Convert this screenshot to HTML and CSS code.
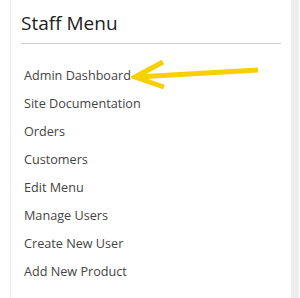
FILE: index.html
```html
<!DOCTYPE html>
<html>
<head>
<meta charset="utf-8">
<link rel="stylesheet" href="styles.css">
</head>
<body>
<div class="page">
  <aside class="card">
    <h2 class="title">Staff Menu</h2>
    <ul class="menu">
      <li class="item">Admin Dashboard</li>
      <li class="item">Site Documentation</li>
      <li class="item">Orders</li>
      <li class="item">Customers</li>
      <li class="item">Edit Menu</li>
      <li class="item">Manage Users</li>
      <li class="item">Create New User</li>
      <li class="item">Add New Product</li>
    </ul>
    <svg class="arrow" width="140" height="40" viewBox="0 0 140 40">
      <g fill="none" stroke="#f8cf00" stroke-width="5" stroke-linecap="butt" stroke-linejoin="miter">
        <line x1="127" y1="15" x2="6" y2="22"/>
        <polyline points="32,7 4,22 33,32"/>
      </g>
    </svg>
  </aside>
  <div class="strip"></div>
</div>
</body>
</html>
```
FILE: styles.css
```css
html, body {
  margin: 0;
  padding: 0;
  background: #fff;
}
.page {
  display: flex;
  height: 298px;
  padding-left: 10px;
}
.card {
  position: relative;
  width: 260px;
  border-left: 1px solid #ececec;
  padding: 0 10px;
  font-family: "Open Sans", sans-serif;
}
.strip {
  width: 8px;
  background: #ededed;
}
.title {
  margin: 0;
  padding-top: 11px;
  padding-bottom: 8px;
  font-size: 19px;
  line-height: 24px;
  font-weight: 400;
  color: #222;
  border-bottom: 1px solid #cccccc;
}
.menu {
  list-style: none;
  margin: 0;
  padding: 17px 0 0 3px;
}
.item {
  font-size: 12.65px;
  line-height: 28px;
  color: #444;
}
.arrow {
  position: absolute;
  left: 120px;
  top: 55px;
}
```
